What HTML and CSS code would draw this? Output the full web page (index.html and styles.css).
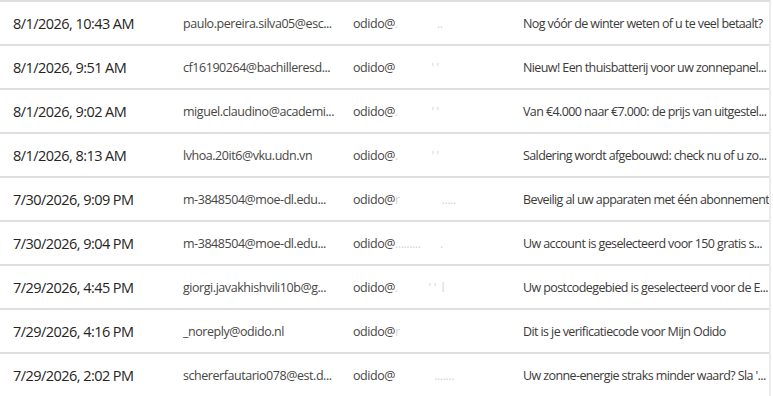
FILE: index.html
```html
<!DOCTYPE html>
<html lang="en">
<head>
  <meta charset="UTF-8" />
  <title>Messages</title>
  <link rel="stylesheet" href="styles.css">
</head>
<body>
  <div class="msg-list">
    <div class="msg-row">
      <div class="cell date">8/1/2026, 10:43 AM</div>
      <div class="cell">paulo.pereira.silva05@esc...</div>
      <div class="cell">odido@<span class="redact">.&nbsp;&nbsp;&nbsp;&nbsp;&nbsp;&nbsp;&nbsp;&nbsp;&nbsp;&nbsp;&nbsp;&nbsp;&nbsp;&nbsp;..</span></div>
      <div class="cell subject">Nog vóór de winter weten of u te veel betaalt?</div>
    </div>
    <div class="msg-row">
      <div class="cell date">8/1/2026, 9:51 AM</div>
      <div class="cell">cf16190264@bachilleresd...</div>
      <div class="cell">odido@<span class="redact">&nbsp;&nbsp;&nbsp;&nbsp;&nbsp;&nbsp;&nbsp;&nbsp;&nbsp;&nbsp;&nbsp;&nbsp;&nbsp;' '</span></div>
      <div class="cell subject">Nieuw! Een thuisbatterij voor uw zonnepanel...</div>
    </div>
    <div class="msg-row">
      <div class="cell date">8/1/2026, 9:02 AM</div>
      <div class="cell">miguel.claudino@academi...</div>
      <div class="cell">odido@<span class="redact">.&nbsp;&nbsp;&nbsp;&nbsp;&nbsp;&nbsp;&nbsp;&nbsp;&nbsp;&nbsp;&nbsp;&nbsp;' '</span></div>
      <div class="cell subject">Van €4.000 naar €7.000: de prijs van uitgestel...</div>
    </div>
    <div class="msg-row">
      <div class="cell date">8/1/2026, 8:13 AM</div>
      <div class="cell">lvhoa.20it6@vku.udn.vn</div>
      <div class="cell">odido@<span class="redact">.&nbsp;&nbsp;&nbsp;&nbsp;&nbsp;&nbsp;&nbsp;&nbsp;&nbsp;&nbsp;&nbsp;&nbsp;' '</span></div>
      <div class="cell subject">Saldering wordt afgebouwd: check nu of u zo...</div>
    </div>
    <div class="msg-row">
      <div class="cell date">7/30/2026, 9:09 PM</div>
      <div class="cell">m-3848504@moe-dl.edu...</div>
      <div class="cell">odido@<span class="redact">r&nbsp;&nbsp;&nbsp;&nbsp;&nbsp;&nbsp;&nbsp;&nbsp;&nbsp;&nbsp;&nbsp;&nbsp;&nbsp;&nbsp;&nbsp;.....</span></div>
      <div class="cell subject">Beveilig al uw apparaten met één abonnement</div>
    </div>
    <div class="msg-row">
      <div class="cell date">7/30/2026, 9:04 PM</div>
      <div class="cell">m-3848504@moe-dl.edu...</div>
      <div class="cell">odido@<span class="redact">.........&nbsp;&nbsp;&nbsp;&nbsp;&nbsp;&nbsp;&nbsp;.</span></div>
      <div class="cell subject">Uw account is geselecteerd voor 150 gratis s...</div>
    </div>
    <div class="msg-row">
      <div class="cell date">7/29/2026, 4:45 PM</div>
      <div class="cell">giorgi.javakhishvili10b@g...</div>
      <div class="cell">odido@<span class="redact">.&nbsp;&nbsp;&nbsp;&nbsp;&nbsp;&nbsp;&nbsp;&nbsp;&nbsp;&nbsp;&nbsp;' '&nbsp;&nbsp;l</span></div>
      <div class="cell subject">Uw postcodegebied is geselecteerd voor de E...</div>
    </div>
    <div class="msg-row">
      <div class="cell date">7/29/2026, 4:16 PM</div>
      <div class="cell">_noreply@odido.nl</div>
      <div class="cell">odido@<span class="redact">r</span></div>
      <div class="cell subject">Dit is je verificatiecode voor Mijn Odido</div>
    </div>
    <div class="msg-row">
      <div class="cell date">7/29/2026, 2:02 PM</div>
      <div class="cell">schererfautario078@est.d...</div>
      <div class="cell">odido@<span class="redact">&nbsp;&nbsp;&nbsp;&nbsp;&nbsp;&nbsp;&nbsp;&nbsp;&nbsp;&nbsp;&nbsp;&nbsp;&nbsp;&nbsp;.......</span></div>
      <div class="cell subject">Uw zonne-energie straks minder waard? Sla '...</div>
    </div>
  </div>
</body>
</html>
```

FILE: styles.css
```css
body {
  margin: 0;
  background: #fff;
  font-family: "Open Sans", "Noto Sans", sans-serif;
  color: #484644;
}

.msg-list {
  width: 769px;
  border-top: 2px solid #e1dfdd;
  border-right: 2px solid #edebe9;
}

.msg-row {
  display: grid;
  grid-template-columns: 170px 170px 170px 1fr;
  height: 42px;
  border-bottom: 2px solid #e1dfdd;
  align-items: center;
}

.cell {
  padding: 0 6px 0 13px;
  font-size: 12.5px;
  letter-spacing: -0.45px;
  white-space: nowrap;
  overflow: hidden;
}

.cell.date {
  font-size: 14.5px;
  letter-spacing: -0.55px;
  color: #252423;
}

.cell.subject {
  padding-right: 0;
  letter-spacing: -0.6px;
  color: #3b3a39;
}

.redact {
  color: #d8d6d4;
}
```
